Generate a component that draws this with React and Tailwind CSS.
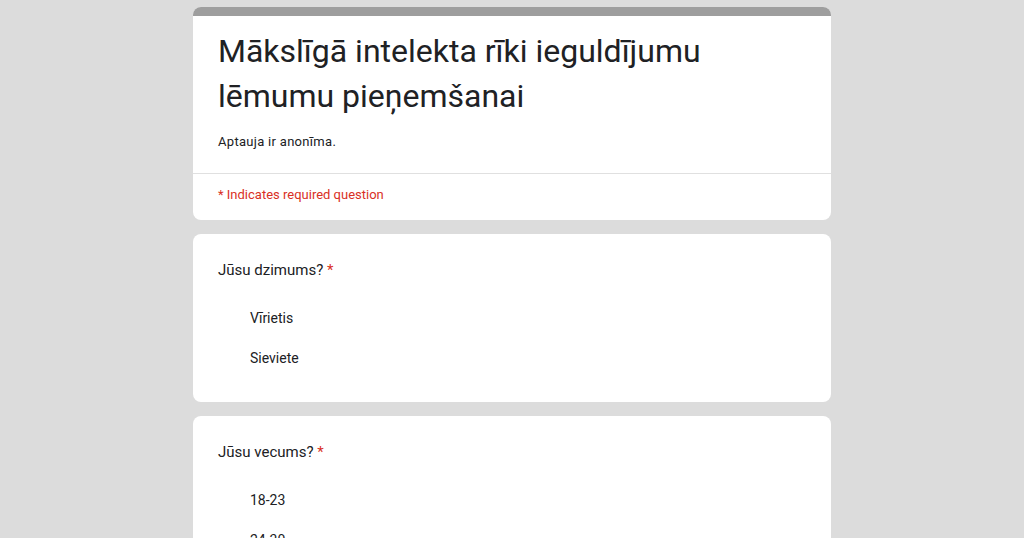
import React from "react";

const questions = [
  { id: 1, title: "Jūsu dzimums?", options: ["Vīrietis", "Sieviete"] },
  { id: 2, title: "Jūsu vecums?", options: ["18-23", "24-30", "31-40"] },
];

const QuestionCard = ({ question }) => (
  <div className="bg-white rounded-lg px-[25px] pt-[24px] pb-[32px]">
    <div className="text-[15px] text-[#202124] leading-[24px]">
      {question.title} <span className="text-[#d93025]">*</span>
    </div>
    <div className="mt-[24px] pl-[32px] flex flex-col gap-[16px]">
      {question.options.map((opt) => (
        <div key={opt} className="text-[14px] text-[#202124] leading-[24px]">
          {opt}
        </div>
      ))}
    </div>
  </div>
);

export default function App() {
  return (
    <div
      className="bg-[#dcdcdc] pt-[7px] overflow-hidden h-[538px]"
      style={{ fontFamily: "Roboto, 'Liberation Sans', sans-serif" }}
    >
      <div className="w-[638px] mx-auto flex flex-col gap-[14px]">
        <div className="bg-white rounded-lg overflow-hidden">
          <div className="h-[9px] bg-[#9e9e9e]" />
          <div className="px-[25px] pt-[13px] pb-[21px]">
            <h1 className="text-[32px] leading-[45px] text-[#202124] font-normal">
              Mākslīgā intelekta rīki ieguldījumu
              <br />
              lēmumu pieņemšanai
            </h1>
            <p className="mt-[13px] text-[13px] text-[#202124] tracking-[0.3px]">
              Aptauja ir anonīma.
            </p>
          </div>
          <div className="border-t border-[#e0e0e0] px-[25px] pt-[11px] pb-[16px] text-[13px] text-[#d93025]">
            * Indicates required question
          </div>
        </div>
        {questions.map((q) => (
          <QuestionCard key={q.id} question={q} />
        ))}
      </div>
    </div>
  );
}
